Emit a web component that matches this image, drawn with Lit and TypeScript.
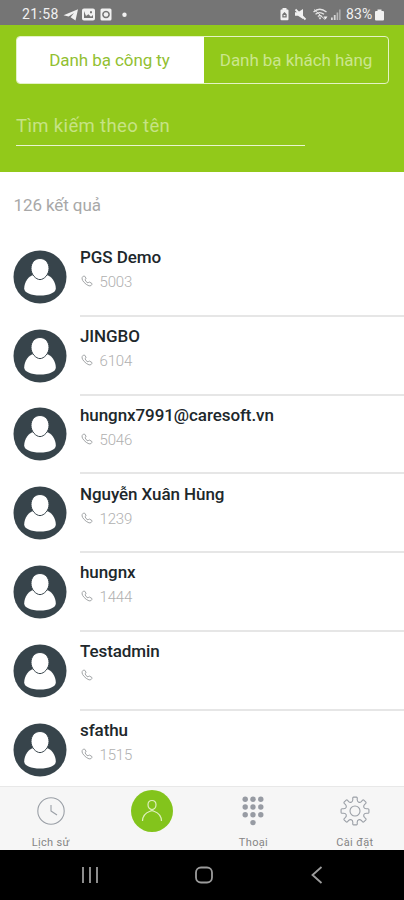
import { LitElement, html, css, svg, nothing } from "lit";
import { customElement, property } from "lit/decorators.js";

interface Contact {
  name: string;
  ext: string;
}

const CONTACTS: Contact[] = [
  { name: "PGS Demo", ext: "5003" },
  { name: "JINGBO", ext: "6104" },
  { name: "hungnx7991@caresoft.vn", ext: "5046" },
  { name: "Nguyễn Xuân Hùng", ext: "1239" },
  { name: "hungnx", ext: "1444" },
  { name: "Testadmin", ext: "" },
  { name: "sfathu", ext: "1515" },
];

/** Outline of an eight-toothed gear with rounded valleys, centred on the origin. */
function gearPath(outer: number, inner: number): string {
  const at = (r: number, deg: number) => {
    const a = (deg * Math.PI) / 180;
    return `${(r * Math.cos(a)).toFixed(2)} ${(r * Math.sin(a)).toFixed(2)}`;
  };
  let d = "";
  for (let i = 0; i < 8; i++) {
    const c = i * 45 - 90;
    d += `${i ? "L" : "M"}${at(inner + 0.9, c - 11)}L${at(outer - 0.8, c - 10)}Q${at(outer, c - 9)} ${at(outer, c - 6)}`;
    d += `L${at(outer, c + 6)}Q${at(outer, c + 9)} ${at(outer - 0.8, c + 10)}L${at(inner + 0.9, c + 11)}`;
    d += `C${at(inner - 1.4, c + 15)} ${at(inner - 1.4, c + 30)} ${at(inner + 0.9, c + 34)}`;
  }
  return d + "Z";
}

@customElement("status-bar")
export class StatusBar extends LitElement {
  static styles = css`
    :host {
      display: flex;
      align-items: center;
      height: 25px;
      box-sizing: border-box;
      padding: 3px 20px 0 22px;
      background: #757575;
      color: #f1f1f1;
      font: 400 14px/20px Roboto, sans-serif;
    }
    svg { display: block; fill: #f1f1f1; }
    .time { width: 41px; letter-spacing: 0.35px; }
    .left { width: 66px; height: 16px; }
    .right { width: 63px; height: 16px; margin-left: auto; }
    .pct { width: 28px; margin-left: 4px; letter-spacing: 0.1px; }
    .battery { width: 9px; height: 13px; margin-left: 1px; }
  `;
  render() {
    return html`
      <span class="time">21:58</span>
      <svg class="left" viewBox="63 6 66 16">
        <path d="M63.5 15.2 78 9.2 75.5 20.5 70.6 17.2 74 13 68.6 16.4Z" />
        <path fill-rule="evenodd" d="M84 8.5h9q2 0 2 2v8q0 2-2 2h-9q-2 0-2-2v-8q0-2 2-2ZM84 11v7h9v-3l-2 1.8-2.6-2.6-2.4 1.8Z M90 11.2h2v2h-2Z" />
        <path fill-rule="evenodd" d="M102 8.5h8q1.500 0 1.500 1.500v9q0 1.500-1.500 1.500h-8q-1.500 0-1.500-1.500v-9q0-1.500 1.500-1.500ZM106 10.700a3.800 3.800 0 1 0 .01 0Z" />
        <circle cx="106" cy="14.500" r="2.300" />
        <circle cx="124.500" cy="14.700" r="2.200" />
      </svg>
      <svg class="right" viewBox="277 6 63 16">
        <path fill-rule="evenodd" d="M280.500 9.500v-1.500h4v1.500h1q1 0 1 1v8.500q0 1.200-1 1.200h-6q-1 0-1-1.200v-8.500q0-1 1-1ZM282.500 12l-2.200 2.200v3.300h4.400v-3.300ZM281.600 15h1.800v1.300h-1.800Z" />
        <path d="M293 12.200h3l5-3.200v10l-5-3.300h-3Z" />
        <path d="M293.500 9.500 303.500 19.500" stroke="#f1f1f1" stroke-width="1.800" />
        <g fill="none" stroke="#e4e4e4" stroke-width="1.300">
          <path d="M311.500 12q6-5.500 13 0M313.500 14.300q4-3.500 8.500 0M315.800 16.500q2-1.600 4 0" />
          <path d="M312 9.500 323 19.500" stroke-width="1" />
        </g>
        <path d="M321.500 16.500h4l-2 3Z M316.500 17.500h3l-1.500 2Z" />
        <path d="M329 17.500h1.800v2.500h-1.800ZM331.800 15h1.800v5h-1.800Z" opacity=".8" />
        <path d="M334.600 12.500h1.600v7.500h-1.600ZM337.200 9.500h1.300v10.500h-1.300Z" opacity=".55" />
      </svg>
      <span class="pct">83%</span>
      <svg class="battery" viewBox="0 0 9 13">
        <path d="M2.500 1.500h4v1.500h1.500q1 0 1 1v7.500q0 1-1 1h-7q-1 0-1-1v-7.500q0-1 1-1h1.500Z" />
      </svg>
    `;
  }
}

@customElement("contact-row")
export class ContactRow extends LitElement {
  @property({ attribute: false }) contact!: Contact;

  static styles = css`
    :host {
      display: flex;
      height: 78.8px;
      box-sizing: border-box;
      padding-left: 13px;
      font-family: Roboto, sans-serif;
    }
    .avatar { flex: none; width: 54px; height: 54px; margin-top: 11.8px; }
    .body {
      flex: 1;
      margin-left: 13px;
      padding-top: 8.3px;
      border-bottom: 2px solid #e6e6e6;
      box-sizing: border-box;
    }
    .name { font-weight: 500; font-size: 17px; line-height: 22px; letter-spacing: -0.08px; color: #20272b; white-space: nowrap; }
    .line { display: flex; align-items: center; margin-top: 3px; height: 22px; }
    .line svg { width: 12px; height: 12px; margin: 0 6.5px 2px 1px; }
    .ext { font-weight: 300; font-size: 15px; line-height: 22px; letter-spacing: -0.15px; color: #b0b0b0; }
  `;
  render() {
    const { name, ext } = this.contact;
    return html`
      <svg class="avatar" viewBox="-27 -27 54 54">
        <circle r="26.500" fill="#37444b" />
        <path fill="#fff" d="M-6.500-2H6.500C11-1.500 15.800 5 15.800 11.500C15.800 15.800 9 18.500 0 18.500S-15.800 15.800-15.800 11.500C-15.800 5-11-1.500-6.500-2Z" />
        <path fill="#fff" stroke="#37444b" stroke-width="1" d="M0-18.500C5.500-18.500 9-14 9-8.500C9-2.500 4 2.600 0 2.600S-9-2.500-9-8.500C-9-14-5.500-18.500 0-18.500Z" />
      </svg>
      <div class="body">
        <div class="name">${name}</div>
        <div class="line">
          <svg viewBox="0 0 12 12" fill="none" stroke="#969a9c" stroke-width=".9" stroke-linejoin="round">
            <path d="M1.200 2.500Q2.500.3 3.700 1.200L5 3.200Q5.200 4 4 4.700Q4.600 6.800 7 8Q7.800 6.900 8.600 7.100L10.900 8.500Q11.400 9.300 9.900 10.700Q8.500 11.700 5.300 9.400Q.2 5.300 1.200 2.500Z" />
          </svg>
          ${ext ? html`<span class="ext">${ext}</span>` : nothing}
        </div>
      </div>
    `;
  }
}

@customElement("tab-bar")
export class TabBar extends LitElement {
  static styles = css`
    :host {
      display: grid;
      grid-template-columns: repeat(4, 101.4px);
      height: 64px;
      box-sizing: border-box;
      border-top: 1px solid #e8e8e8;
      background: #f6f6f6;
      font-family: Roboto, sans-serif;
      overflow: hidden;
    }
    .tab { display: flex; flex-direction: column; align-items: center; padding-top: 3px; }
    svg { flex: none; width: 42px; height: 42px; fill: none; stroke: #9a9fa6; stroke-width: 1.1; stroke-linejoin: round; }
    .label { margin-top: 3px; font-size: 11px; line-height: 16px; letter-spacing: 0.35px; color: #858585; }
  `;
  render() {
    return html`
      <div class="tab">
        <svg viewBox="-21 -21 42 42"><circle r="13.200" /><path d="M0-6V0L6 4" /></svg>
        <span class="label">Lịch sử</span>
      </div>
      <div class="tab">
        <svg viewBox="-21 -21 42 42">
          <circle r="21" fill="#83c41c" stroke="none" />
          <path stroke="#dff0bf" stroke-width="1.200" d="M0-10.500C2.600-10.500 4-8.700 4-6.200C4-3.500 2.300-1.500 0-1.500S-4-3.500-4-6.200C-4-8.700-2.600-10.500 0-10.500ZM-9.500 10C-9.500 3.500-5.500 1.500-2 .200Q0-1 2 .200C5.500 1.500 9.500 3.500 9.500 10" />
        </svg>
      </div>
      <div class="tab">
        <svg viewBox="-21 -21 42 42">
          ${[-1, 0, 1, 2].map((r) =>
            [-1, 0, 1].map((c) =>
              r === 2 && c !== 0 ? nothing : svg`<circle cx=${c * 7.8} cy=${r * 7.8 - 4} r="2.700" fill="#979ba3" stroke="none" />`
            )
          )}
        </svg>
        <span class="label">Thoại</span>
      </div>
      <div class="tab">
        <svg viewBox="-21 -21 42 42"><path d=${gearPath(14, 10.5)} /><circle r="5" /></svg>
        <span class="label">Cài đặt</span>
      </div>
    `;
  }
}

@customElement("system-nav")
export class SystemNav extends LitElement {
  static styles = css`
    :host {
      display: grid;
      grid-template-columns: repeat(3, 113.5px);
      justify-content: center;
      align-items: center;
      justify-items: center;
      height: 50px;
      padding-left: 3px;
      box-sizing: border-box;
      background: #000;
    }
    svg { width: 20px; height: 20px; fill: none; stroke: #9c9c9c; stroke-width: 1.8; }
  `;
  render() {
    return html`
      <svg viewBox="0 0 20 20"><path d="M3 2V18M10 2V18M17 2V18" /></svg>
      <svg viewBox="0 0 20 20"><rect x="2" y="2.500" width="16" height="15" rx="5" /></svg>
      <svg viewBox="0 0 20 20"><path d="M14.500 2 5.500 10 14.500 18" /></svg>
    `;
  }
}

@customElement("app-root")
export class AppRoot extends LitElement {
  static styles = css`
    :host {
      display: flex;
      flex-direction: column;
      width: 404px;
      height: 900px;
      overflow: hidden;
      background: #fff;
      font-family: Roboto, sans-serif;
    }
    .header { height: 147px; flex: none; box-sizing: border-box; padding: 11px 15px 0 16px; background: #92c91a; }
    .tabs {
      display: grid;
      grid-template-columns: 187px 1fr;
      height: 48px;
      box-sizing: border-box;
      border: 1px solid #e4f3c6;
      border-radius: 4px;
      overflow: hidden;
      font-size: 17px;
      line-height: 47px;
      text-align: center;
      letter-spacing: -0.07px;
    }
    .on { background: #fff; color: #92bf31; padding-right: 2px; }
    .off { color: #cbe68e; }
    .search {
      width: 289px;
      height: 33px;
      margin-top: 29px;
      box-sizing: border-box;
      border-bottom: 1.5px solid #e9f5cf;
      color: #c6e385;
      font-size: 18.5px;
      line-height: 27px;
      letter-spacing: 0.35px;
    }
    .count { flex: none; height: 66px; padding-left: 13.5px; font-size: 17px; line-height: 66px; letter-spacing: -0.1px; color: #a8a8a8; }
    .list { height: 548px; flex: none; overflow: hidden; }
  `;
  render() {
    return html`
      <status-bar></status-bar>
      <div class="header">
        <div class="tabs">
          <div class="on">Danh bạ công ty</div>
          <div class="off">Danh bạ khách hàng</div>
        </div>
        <div class="search">Tìm kiếm theo tên</div>
      </div>
      <div class="count">126 kết quả</div>
      <div class="list">${CONTACTS.map((c) => html`<contact-row .contact=${c}></contact-row>`)}</div>
      <tab-bar></tab-bar>
      <system-nav></system-nav>
    `;
  }
}
